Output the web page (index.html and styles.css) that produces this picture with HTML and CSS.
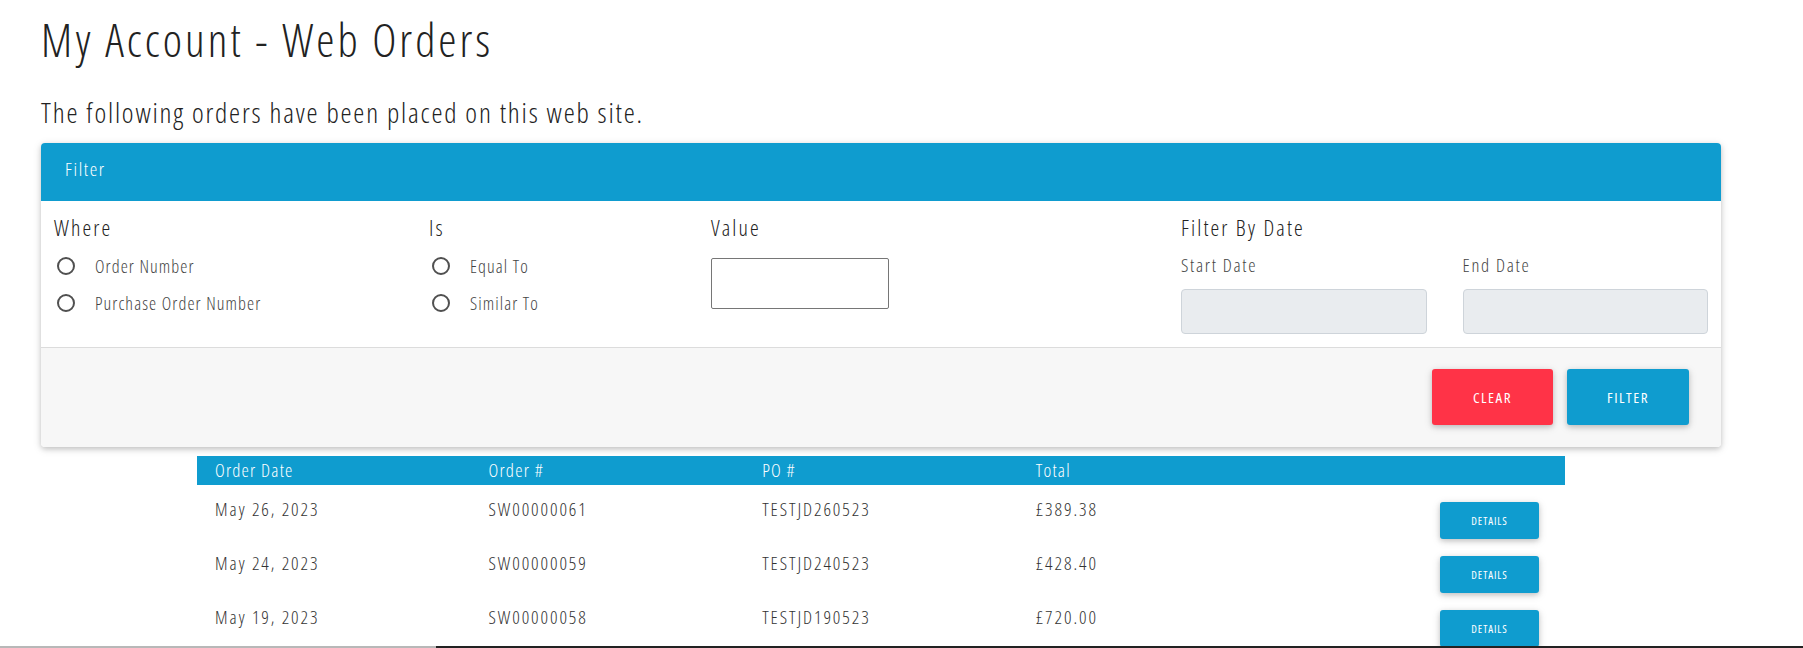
FILE: index.html
```html
<!DOCTYPE html>
<html lang="en">
<head>
  <meta charset="UTF-8">
  <meta name="viewport" content="width=device-width, initial-scale=1.0">
  <title>My Account - Web Orders</title>
  <link rel="stylesheet" href="styles.css">
</head>
<body>
  <div class="container">
    <h1 class="page-title">My Account - Web Orders</h1>
    <p class="intro">The following orders have been placed on this web site.</p>

    <div class="card">
      <div class="card-header">Filter</div>
      <div class="card-body">
        <div class="col">
          <h4 class="col-title">Where</h4>
          <label class="radio"><input type="radio" name="where"><span>Order Number</span></label>
          <label class="radio"><input type="radio" name="where"><span>Purchase Order Number</span></label>
        </div>
        <div class="col">
          <h4 class="col-title">Is</h4>
          <label class="radio"><input type="radio" name="is"><span>Equal To</span></label>
          <label class="radio"><input type="radio" name="is"><span>Similar To</span></label>
        </div>
        <div class="col">
          <h4 class="col-title">Value</h4>
          <input class="value-input" type="text">
        </div>
        <div class="col">
          <h4 class="col-title">Filter By Date</h4>
          <div class="dates">
            <div class="date-field">
              <label>Start Date</label>
              <input class="date-input" type="text" disabled>
            </div>
            <div class="date-field">
              <label>End Date</label>
              <input class="date-input" type="text" disabled>
            </div>
          </div>
        </div>
      </div>
      <div class="card-footer">
        <button class="btn btn-clear">Clear</button>
        <button class="btn btn-filter">Filter</button>
      </div>
    </div>

    <table class="orders">
      <thead>
        <tr>
          <th>Order Date</th>
          <th>Order #</th>
          <th>PO #</th>
          <th>Total</th>
          <th></th>
        </tr>
      </thead>
      <tbody>
        <tr>
          <td>May 26, 2023</td>
          <td>SW00000061</td>
          <td>TESTJD260523</td>
          <td>&pound;389.38</td>
          <td class="action"><button class="btn-details">Details</button></td>
        </tr>
        <tr>
          <td>May 24, 2023</td>
          <td>SW00000059</td>
          <td>TESTJD240523</td>
          <td>&pound;428.40</td>
          <td class="action"><button class="btn-details">Details</button></td>
        </tr>
        <tr>
          <td>May 19, 2023</td>
          <td>SW00000058</td>
          <td>TESTJD190523</td>
          <td>&pound;720.00</td>
          <td class="action"><button class="btn-details">Details</button></td>
        </tr>
      </tbody>
    </table>
  </div>

  <div class="window-edge"></div>
</body>
</html>
```

FILE: styles.css
```css
* {
  margin: 0;
  padding: 0;
  box-sizing: border-box;
}

body {
  font-family: "Open Sans", "DejaVu Sans Condensed", sans-serif;
  font-stretch: 75%;
  font-weight: 300;
  background: #fff;
  color: #333;
  overflow: hidden;
}

.container {
  width: 1680px;
  margin-left: 41px;
}

.page-title {
  margin-top: 11px;
  font-size: 46px;
  line-height: 56px;
  font-weight: 300;
  letter-spacing: 3px;
  color: #222;
}

.intro {
  margin: 28px 0 14px;
  font-size: 28px;
  line-height: 34px;
  letter-spacing: 1.8px;
  color: #222;
}


.card {
  background: #fff;
  border-radius: 4px;
  box-shadow: 0 2px 5px 0 rgba(0, 0, 0, 0.16), 0 2px 10px 0 rgba(0, 0, 0, 0.12);
  overflow: hidden;
}

.card-header {
  height: 58px;
  padding: 15px 24px 0;
  background: #0f9ccf;
  color: #fff;
  font-size: 19px;
  line-height: 23px;
  font-weight: 300;
  letter-spacing: 1.6px;
}

.card-body {
  display: grid;
  grid-template-columns: 375px 282px 470px 1fr;
  padding: 13px;
}

.col-title {
  font-size: 22px;
  line-height: 27px;
  font-weight: 300;
  letter-spacing: 2.1px;
  color: #222;
}

.radio {
  display: flex;
  align-items: center;
  height: 37px;
  font-size: 18px;
  letter-spacing: 1.1px;
  color: #444;
}

.col-title + .radio {
  margin-top: 6px;
}

.radio input {
  appearance: none;
  flex: none;
  width: 18px;
  height: 18px;
  margin: 0 20px 0 3px;
  border: 2px solid #505050;
  border-radius: 50%;
}

.value-input {
  display: block;
  width: 178px;
  height: 51px;
  margin-top: 17px;
  border: 1px solid #767676;
  border-radius: 2px;
  background: #fff;
}

.dates {
  display: grid;
  grid-template-columns: 1fr 1fr;
  column-gap: 36px;
  margin-top: 12px;
}

.date-field label {
  display: block;
  font-size: 18.5px;
  line-height: 23px;
  letter-spacing: 1.7px;
  color: #444;
}

.date-input {
  display: block;
  width: 100%;
  height: 45px;
  margin-top: 13px;
  border: 1px solid #ced4da;
  border-radius: 4px;
  background: #e9ecef;
}


.card-footer {
  display: flex;
  justify-content: flex-end;
  gap: 14px;
  padding: 21px 32px 22px;
  border-top: 1px solid #dcdcdc;
  background: #f7f7f7;
}

.btn {
  width: 121px;
  height: 56px;
  border: none;
  border-radius: 3px;
  color: #fff;
  font-family: inherit;
  font-stretch: 75%;
  font-size: 15px;
  font-weight: 400;
  letter-spacing: 1.5px;
  text-transform: uppercase;
  box-shadow: 0 2px 5px 0 rgba(0, 0, 0, 0.16), 0 2px 10px 0 rgba(0, 0, 0, 0.12);
  cursor: pointer;
}

.btn-clear {
  background: #ff3347;
}

.btn-filter {
  width: 122px;
  background: #0f9ccf;
}


.orders {
  width: 1368px;
  margin: 9px auto 0;
  border-collapse: collapse;
  table-layout: fixed;
}

.orders th {
  padding: 2px 18px 4px;
  background: #0f9ccf;
  color: #fff;
  font-size: 18.5px;
  line-height: 23px;
  font-weight: 300;
  letter-spacing: 1.2px;
  text-align: left;
}

.orders td {
  padding: 12px 18px 0;
  font-size: 18.5px;
  line-height: 23px;
  letter-spacing: 1.9px;
  color: #333;
  vertical-align: top;
}

.orders td.action {
  padding-right: 26px;
}

.btn-details {
  display: block;
  width: 99px;
  height: 37px;
  margin: 5px 0 0 auto;
  border: none;
  border-radius: 3px;
  background: #0f9ccf;
  color: #fff;
  font-family: inherit;
  font-stretch: 75%;
  font-size: 11px;
  font-weight: 400;
  letter-spacing: 0.9px;
  text-transform: uppercase;
  box-shadow: 0 2px 5px 0 rgba(0, 0, 0, 0.16), 0 2px 10px 0 rgba(0, 0, 0, 0.12);
  cursor: pointer;
}

.window-edge {
  position: fixed;
  left: 0;
  right: 0;
  bottom: 0;
  height: 2px;
  background: linear-gradient(to right, #b8b8b8 0, #b8b8b8 436px, #222 436px);
}
```
